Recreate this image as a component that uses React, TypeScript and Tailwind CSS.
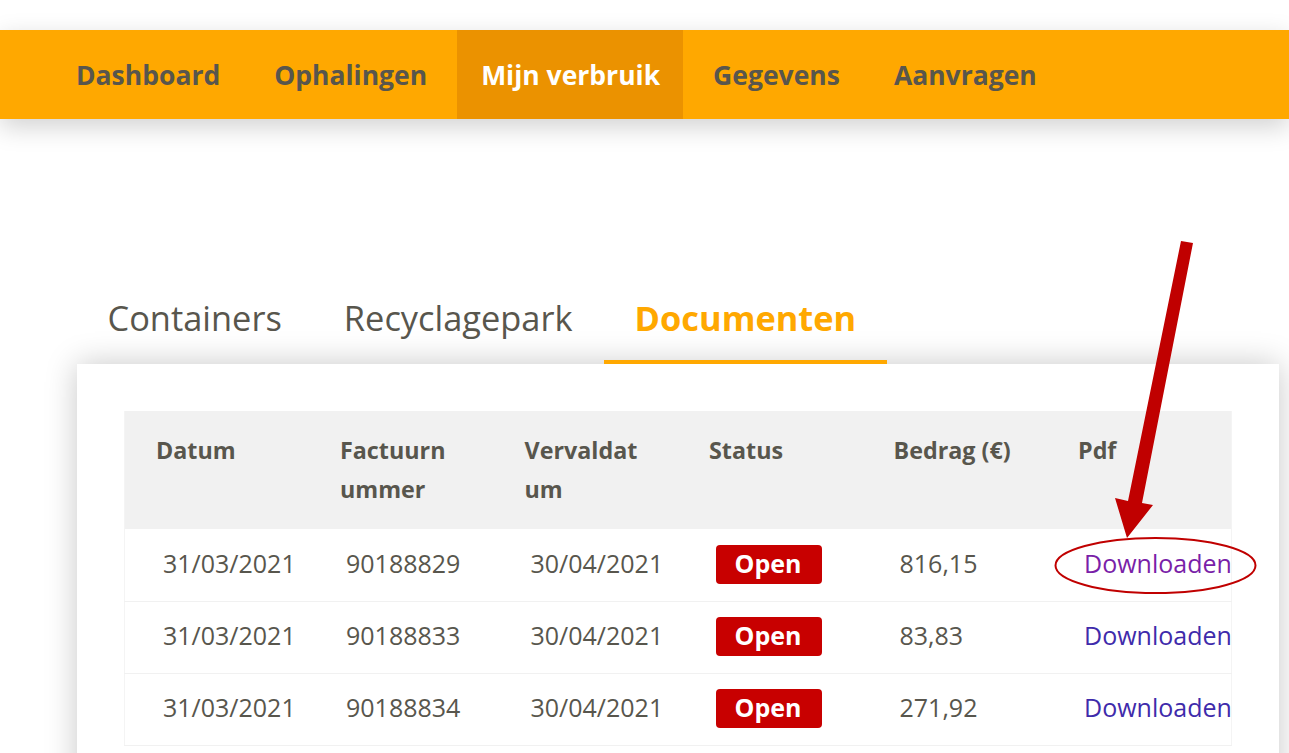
const navItems = ["Dashboard", "Ophalingen", "Mijn verbruik", "Gegevens", "Aanvragen"];
const tabs = ["Containers", "Recyclagepark", "Documenten"];
const headers = ["Datum", "Factuurnummer", "Vervaldatum", "Status", "Bedrag (€)", "Pdf"];

const rows = [
  { date: "31/03/2021", nr: "90188829", due: "30/04/2021", amount: "816,15", visited: true },
  { date: "31/03/2021", nr: "90188833", due: "30/04/2021", amount: "83,83", visited: false },
  { date: "31/03/2021", nr: "90188834", due: "30/04/2021", amount: "271,92", visited: false },
];

function Nav() {
  return (
    <nav className="mt-[30px] flex h-[89px] bg-[#ffa800] pl-[49px] shadow-[0_8px_24px_rgba(0,0,0,0.18)]">
      {navItems.map((item) => {
        const active = item === "Mijn verbruik";
        return (
          <a
            key={item}
            className={
              active
                ? "mx-[3px] flex items-center bg-[#eb9200] pt-[3px] pr-[23px] pl-[24px] text-[26.5px] font-bold text-white"
                : "flex items-center px-[27px] pt-[3px] text-[26.5px] font-bold text-[#58564d]"
            }
          >
            {item}
          </a>
        );
      })}
    </nav>
  );
}

function Tabs() {
  return (
    <div className="mt-[174px] flex pl-[76.5px]">
      {tabs.map((tab) => {
        const active = tab === "Documenten";
        return (
          <div
            key={tab}
            className={
              active
                ? "flex h-[71px] items-center border-b-4 border-[#ffa800] px-[31px] pb-[17px] text-[34.4px] font-bold text-[#ffa800]"
                : "flex h-[71px] items-center px-[31px] pb-[21px] text-[34.4px] text-[#58564d]"
            }
          >
            {tab}
          </div>
        );
      })}
    </div>
  );
}

function DocumentsTable() {
  return (
    <table className="w-full table-fixed border-x border-[#f4f4f4] text-[#58564d]">
      <thead className="bg-[#f1f1f1]">
        <tr className="h-[118px]">
          {headers.map((h) => (
            <th key={h} className="break-all pt-[20px] pr-[35px] pb-[20px] pl-[31px] text-left align-top text-[23.3px] leading-[39px] font-bold">
              {h}
            </th>
          ))}
        </tr>
      </thead>
      <tbody>
        {rows.map((r) => (
          <tr key={r.nr} className="h-[72px] border-b border-[#f1f1f1] text-[25px]">
            <td className="pb-[2px] pl-[38px]">{r.date}</td>
            <td className="pb-[2px] pl-[37px]">{r.nr}</td>
            <td className="pb-[2px] pl-[37px]">{r.due}</td>
            <td className="pb-[1px] pl-[38px]">
              <span className="flex h-[39px] w-[106px] items-center justify-center rounded-[4px] bg-[#c80000] pr-[2px] pb-[2px] text-[25px] font-bold text-white">
                Open
              </span>
            </td>
            <td className="pb-[2px] pl-[37px]">{r.amount}</td>
            <td className="pb-[2px] pl-[37px] whitespace-nowrap">
              <a className={r.visited ? "text-[#7a1fa8]" : "text-[#3f2bab]"}>Downloaden</a>
            </td>
          </tr>
        ))}
      </tbody>
    </table>
  );
}

export default function App() {
  return (
    <div className="relative h-[753px] overflow-hidden bg-white font-['Open_Sans',sans-serif]">
      <Nav />
      <Tabs />
      <div className="ml-[77px] w-[1202px] bg-white px-[47px] pt-[47px] pb-[40px] shadow-[0_0_30px_rgba(0,0,0,0.22)]">
        <DocumentsTable />
      </div>

      {/* annotation drawn over the screenshot */}
      <svg className="absolute top-0 left-0" width="1289" height="753" viewBox="0 0 1289 753" fill="none">
        <polygon
          points="1181,241 1193,243 1142,503 1153,505 1127,538 1115,498 1128,501"
          fill="#c00000"
        />
        <ellipse cx="1155.5" cy="565.5" rx="100" ry="27.5" stroke="#c00000" strokeWidth="2" />
      </svg>
    </div>
  );
}
